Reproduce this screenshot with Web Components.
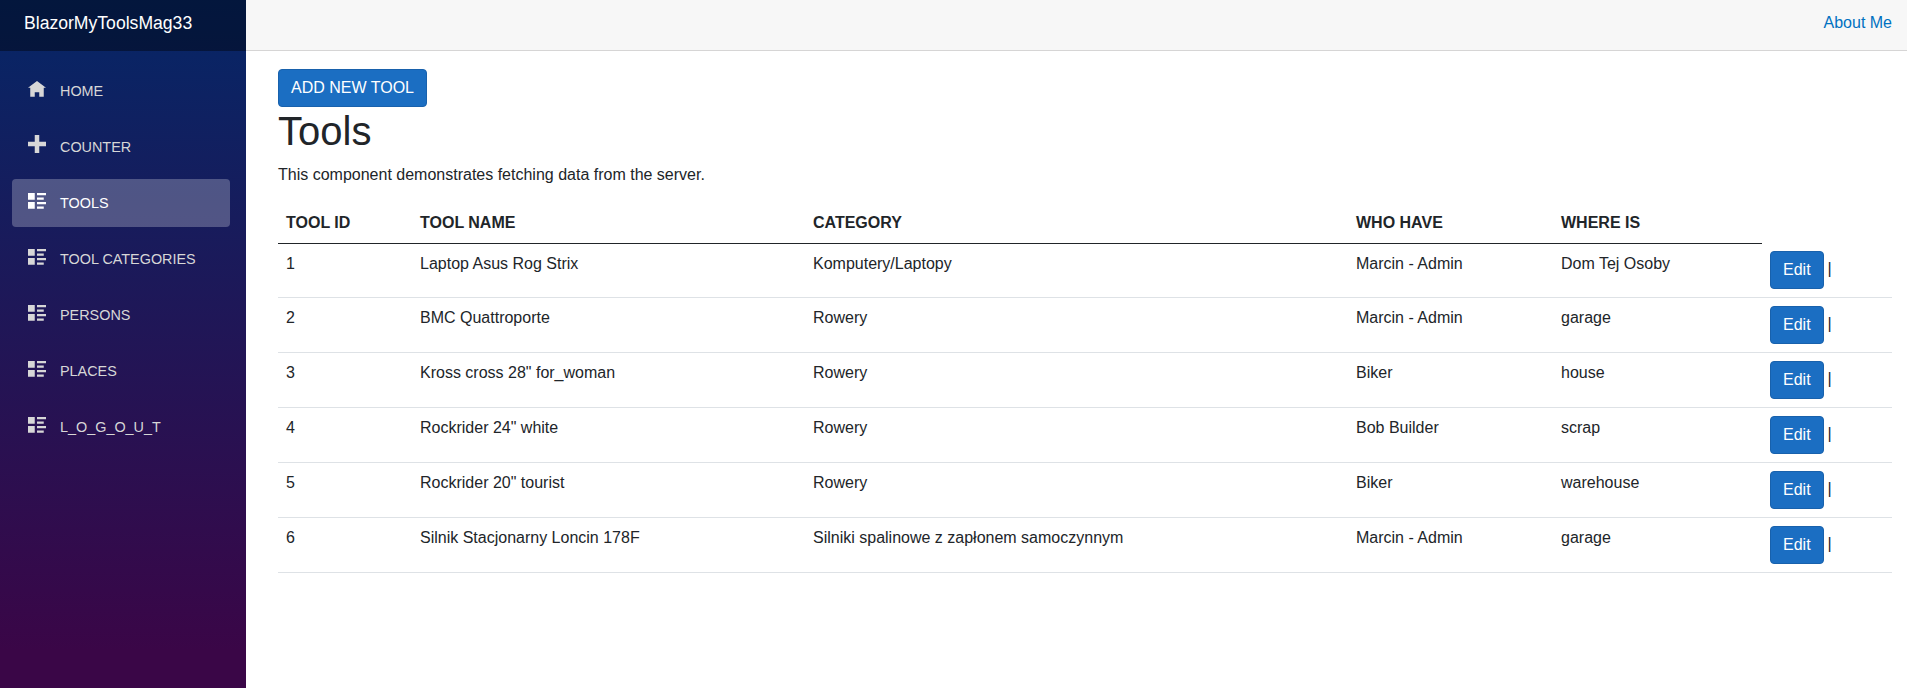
<!DOCTYPE html>
<html lang="en">
<head>
<meta charset="utf-8">
<title>BlazorMyToolsMag33</title>
<style>
html, body { margin: 0; height: 100%; }
body { font: 16px/24px "Liberation Sans", Arial, sans-serif; color: #212529; background: #fff; overflow: hidden; }
</style>
</head>
<body>
<tools-app></tools-app>
<script>
const define = (name, html, setup) => customElements.define(name, class extends HTMLElement {
  connectedCallback() {
    if (this.shadowRoot) return;
    const root = this.attachShadow({ mode: 'open' });
    const t = document.createElement('template');
    t.innerHTML = html;
    root.append(t.content.cloneNode(true));
    if (setup) setup(this, root);
  }
});

const ICONS = {
  home: 'M4 0l-4 3h1v4h2v-2h2v2h2v-4.03l1 .03-4-3z',
  plus: 'M3 0v3h-3v2h3v3h2v-3h3v-2h-3v-3h-2z',
  list: 'M0 0v3h3v-3h-3zm4 0v1h4v-1h-4zm0 2v1h3v-1h-3zm-4 2v3h3v-3h-3zm4 0v1h4v-1h-4zm0 2v1h3v-1h-3z'
};

define('nav-item', `
<style>
:host { display: block; padding: 0 16px 8px 12px; color: #d7d7d7; font-size: 14.4px; }
a { display: flex; align-items: flex-start; height: 48px; padding-left: 16px; border-radius: 4px; color: inherit; text-decoration: none; }
:host([active]) a { background: rgba(255,255,255,.25); color: #fff; }
svg { display: block; width: 18px; height: 18px; margin: 14px 14px 0 0; fill: currentColor; }
:host([icon="plus"]) svg { margin-top: 12px; }
span { line-height: 48px; }
</style>
<a><svg viewBox="0 0 8 8"><path/></svg><span><slot></slot></span></a>`,
(el, root) => root.querySelector('path').setAttribute('d', ICONS[el.getAttribute('icon')]));

define('side-bar', `
<style>
:host { display: flex; flex-direction: column; width: 246px; flex: none; background: linear-gradient(180deg, rgb(5,39,103) -5px, #3a0647 651px); }
header { height: 51px; background: rgba(0,0,0,.4); color: #fff; font-size: 17.6px; line-height: 26px; padding: 10px 0 0 24px; box-sizing: border-box; }
nav { padding-top: 16px; }
</style>
<header>BlazorMyToolsMag33</header>
<nav>
<nav-item icon="home">HOME</nav-item>
<nav-item icon="plus">COUNTER</nav-item>
<nav-item icon="list" active>TOOLS</nav-item>
<nav-item icon="list">TOOL CATEGORIES</nav-item>
<nav-item icon="list">PERSONS</nav-item>
<nav-item icon="list">PLACES</nav-item>
<nav-item icon="list">L_O_G_O_U_T</nav-item>
</nav>`);

define('top-bar', `
<style>
:host { display: flex; justify-content: flex-end; height: 51px; box-sizing: border-box; padding: 11px 15px 0 0; background: #f7f7f7; border-bottom: 1px solid #d6d5d5; }
a { color: #0071c1; }
</style>
<a>About Me</a>`);

define('app-button', `
<style>
:host { display: inline-block; vertical-align: middle; }
button { display: block; height: 38px; margin: 0; padding: 6px 12px; border: 1px solid #1861ac; border-radius: 4px; background: #1b6ec2; color: #fff; font: inherit; line-height: 24px; white-space: nowrap; }
</style>
<button><slot></slot></button>`);

const TOOLS = [
  ['1', 'Laptop Asus Rog Strix', 'Komputery/Laptopy', 'Marcin - Admin', 'Dom Tej Osoby'],
  ['2', 'BMC Quattroporte', 'Rowery', 'Marcin - Admin', 'garage'],
  ['3', 'Kross cross 28" for_woman', 'Rowery', 'Biker', 'house'],
  ['4', 'Rockrider 24" white', 'Rowery', 'Bob Builder', 'scrap'],
  ['5', 'Rockrider 20" tourist', 'Rowery', 'Biker', 'warehouse'],
  ['6', 'Silnik Stacjonarny Loncin 178F', 'Silniki spalinowe z zapłonem samoczynnym', 'Marcin - Admin', 'garage']
];

define('tools-table', `
<style>
:host { display: block; }
table { width: 100%; table-layout: fixed; border-spacing: 0; }
th, td { text-align: left; vertical-align: top; padding: 8px; }
th { border-bottom: 1px solid #212529; }
th:last-child { border: 0; }
td { height: 38px; border-bottom: 1px solid #dee2e6; }
tbody tr:first-child td { height: 37px; }
tbody tr:first-child td:last-child { height: 38px; padding-top: 7px; }
.actions { display: flex; align-items: flex-start; gap: 4px; }
.actions span { padding-top: 6px; }
</style>
<table>
<colgroup><col style="width:134px"><col style="width:393px"><col style="width:543px"><col style="width:205px"><col style="width:209px"><col></colgroup>
<thead><tr><th>TOOL ID</th><th>TOOL NAME</th><th>CATEGORY</th><th>WHO HAVE</th><th>WHERE IS</th><th></th></tr></thead>
<tbody></tbody>
</table>`,
(el, root) => {
  const body = root.querySelector('tbody');
  for (const row of TOOLS) {
    const tr = body.insertRow();
    for (const text of row) tr.insertCell().textContent = text;
    tr.insertCell().innerHTML = '<div class="actions"><app-button>Edit</app-button><span>|</span></div>';
  }
});

define('tools-page', `
<style>
:host { display: block; padding: 18px 15px 0 32px; }
app-button { display: block; width: fit-content; }
h1 { margin: 0 0 8px; font-size: 40px; line-height: 48px; font-weight: 400; }
p { margin: 0 0 16px; }
</style>
<app-button>ADD NEW TOOL</app-button>
<h1>Tools</h1>
<p>This component demonstrates fetching data from the server.</p>
<tools-table></tools-table>`);

define('tools-app', `
<style>
:host { display: flex; height: 100vh; }
main { flex: 1; min-width: 0; }
</style>
<side-bar></side-bar>
<main><top-bar></top-bar><tools-page></tools-page></main>`);
</script>
</body>
</html>
